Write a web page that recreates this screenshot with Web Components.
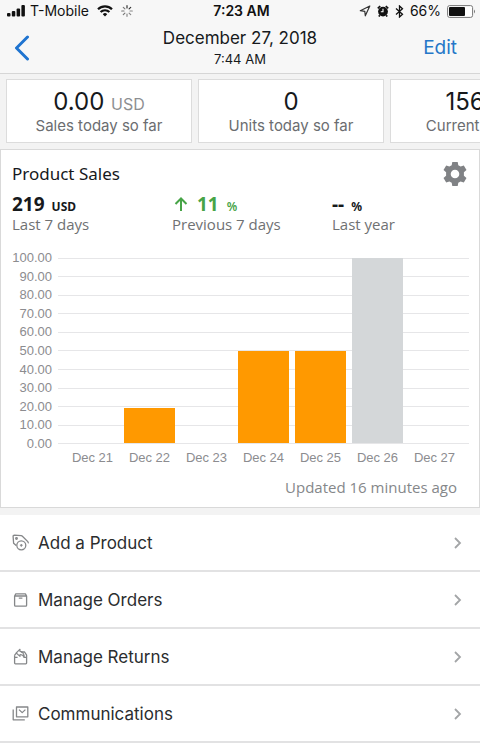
<!DOCTYPE html>
<html lang="en">
<head>
<meta charset="utf-8">
<meta name="viewport" content="width=device-width, initial-scale=1">
<title>Seller dashboard</title>
<style>
  html { background: #fff; }
  body { margin: 0; font-family: Inter, "Liberation Sans", sans-serif; color: #16191c; overflow-x: hidden; }
</style>
</head>
<body>
<seller-app></seller-app>

<script>
const define = (name, markup, setup) => {
  const template = document.createElement('template');
  template.innerHTML = `<style>*{box-sizing:border-box}button{font:inherit;border:0;padding:0;background:none;cursor:pointer}svg{display:block}</style>${markup}`;
  customElements.define(name, class extends HTMLElement {
    constructor() {
      super();
      this.attachShadow({ mode: 'open' }).append(template.content.cloneNode(true));
    }
    connectedCallback() { if (setup) setup(this, this.shadowRoot); }
  });
};

const icons = {
  tag: '<path d="M4.2 11.6 1.6 9.2 1.1 2.4q0-1.3 1.3-1.3l6.800.5q.7.1 1.200.6l5.400 5.400q.8.9.1 1.700"/><circle cx="4.500" cy="4.500" r=".8"/><circle cx="9.300" cy="11.300" r="4.500"/><path d="M7.900 11.300h2.800M9.300 9.900v2.800" stroke-width="1.100"/>',
  box: '<path d="M2.600 5v9.300q0 .9.9.9h10.200q.9 0 .9-.9V5L13.400 2.900H3.800zM3 5h11.200M6.800 7.200h3.600"/>',
  returns: '<path d="M2.600 7.200v7.900q0 .8.800.8h10.400q.8 0 .8-.8V7.200L12.600 4H9M2.600 7.200 4.600 4.800M14.600 9.400h-3M2.600 9.400h3"/><path d="M8 1.200 4.200 5 8 8.400V6.500q3 0 4.300 3Q12 3.800 8 3.400z" stroke-width="1.100"/>',
  mail: '<path d="M4.500 2h11.300v9.800H4.500zM7 4.600l3.200 3 3.200-3M1.200 4.600v10.200h11.600"/>'
};

define('status-bar', `
  <style>
    :host { display: grid; grid-template-columns: 1fr auto 1fr; align-items: center; height: 22px; padding: 0 4px 0 7px; font-size: 14px; line-height: 20px; color: #111; }
    div { display: flex; align-items: center; gap: 4px; }
    .wifi { margin: 0 4px; }
    time { font-weight: 600; }
    .right { justify-content: flex-end; gap: 6px; }
  </style>
  <div>
    <svg width="19" height="12" viewBox="1 0 19 12" fill="#111"><rect x="1" y="8" width="3.5" height="3.5" rx="1"/><rect x="5.8" y="6" width="3.5" height="5.5" rx="1"/><rect x="10.6" y="3.5" width="3.5" height="8" rx="1"/><rect x="15.4" y="0" width="3.5" height="11.5" rx="1"/></svg>
    <span>T-Mobile</span>
    <svg class="wifi" width="16" height="12" viewBox="0 0 16 12" fill="none" stroke="#111" stroke-width="2.2"><path d="M1 4.3a10 10 0 0 1 14 0M3.600 7.100a6.200 6.200 0 0 1 8.800 0"/><path d="m8 11.5-2.200-2.300a3.100 3.100 0 0 1 4.400 0z" fill="#111" stroke="none"/></svg>
    <svg width="12" height="12" viewBox="-6 -6 12 12" stroke-width="1.2" stroke-linecap="round"><path stroke="#333" d="M0-3v-2.300M2.100-2.100l1.600-1.600"/><path stroke="#888" d="M3 0h2.300M2.100 2.100l1.600 1.600M0 3v2.300"/><path stroke="#777" d="M-2.100 2.100l-1.600 1.600M-3 0h-2.300M-2.100-2.100l-1.600-1.600"/></svg>
  </div>
  <time>7:23 AM</time>
  <div class="right">
    <svg width="12" height="12" viewBox="0 0 12 12" fill="none" stroke="#333" stroke-width="1.2" stroke-linejoin="round"><path d="M10.800 1 1.300 5.700l4.500.7.5 4.400z"/></svg>
    <svg width="12" height="12" viewBox="0 0 12 12"><circle cx="6" cy="6.6" r="4.9" fill="#111"/><path d="M.8 3.300 3.200 1M11.200 3.300 8.800 1M2.800 10.300l-1 1.200M9.200 10.300l1 1.200" stroke="#111" stroke-width="1.7"/><path d="M6 3.800v3H3.800" stroke="#fff" stroke-width="1.1" fill="none"/></svg>
    <svg width="9" height="13" viewBox="0 0 9 13" fill="none" stroke="#111" stroke-width="1.3"><path d="m1 3.500 6.500 5.700-3 2.800V1l3 2.800L1 9.500"/></svg>
    <span>66%</span>
    <svg width="29" height="13" viewBox="0 0 29 13"><rect x=".6" y=".6" width="25" height="11.8" rx="2" fill="#fff" stroke="#777"/><rect x="2" y="2" width="16" height="9" rx="1" fill="#111"/><path d="M27 4.500q2 2 0 4z" fill="#777"/></svg>
  </div>`);

define('nav-bar', `
  <style>
    :host { display: grid; grid-template-columns: 1fr auto 1fr; align-items: center; height: 51px; padding: 0 14px; }
    .mid { text-align: center; }
    h1 { margin: 0; font-size: 17px; line-height: 22px; font-weight: 400; }
    p { margin: 0; font-size: 13px; line-height: 20px; }
    button { color: #2577c8; font-size: 19px; line-height: 24px; justify-self: start; }
    .edit { justify-self: end; padding: 0 9px; }
  </style>
  <button aria-label="Back"><svg width="17" height="26" viewBox="0 0 17 26" fill="none" stroke="#1f74d0" stroke-width="3" stroke-linecap="round" stroke-linejoin="round"><path d="M13.500 2 2.500 13l11 11"/></svg></button>
  <div class="mid"><h1>December 27, 2018</h1><p>7:44 AM</p></div>
  <button class="edit">Edit</button>`);

define('metric-card', `
  <style>
    :host { box-sizing: border-box; display: block; flex: 0 0 186px; padding: 8px 4px 6px; background: #fff; border: 1px solid #dcdcdc; text-align: center; white-space: nowrap; }
    .value { font-size: 24px; line-height: 28px; }
    ::slotted(small) { font-size: 16px; line-height: 16px; color: #8d8f92; }
    .label { font-size: 15px; line-height: 20px; color: #6b6d70; }
  </style>
  <div class="value"><slot></slot></div>
  <div class="label"><slot name="label"></slot></div>`);

define('metric-strip', `
  <style>
    :host { display: flex; gap: 6px; padding: 5px 6px 6px; background: #f3f3f3; overflow: hidden; border-top: 1px solid #d6d6d6; }
  </style>
  <slot></slot>`);

define('sales-stat', `
  <style>
    :host { display: block; color: #6f7173; }
    .value { display: flex; align-items: baseline; gap: 7px; height: 20px; font-size: 19px; line-height: 20px; font-weight: 700; color: #16191c; }
    :host([up]) .value { color: #47a447; gap: 8px; }
    .unit { font-size: 12px; }
    :host([up]) .unit { font-weight: 600; }
    svg { display: none; }
    :host([up]) svg { display: block; }
    .label { font: 15px/20px "Open Sans", "Noto Sans", sans-serif; }
  </style>
  <div class="value"><svg width="17" height="14" viewBox="-2 0 17 14" fill="none" stroke="#47a447" stroke-width="2"><path d="M7 14V2M1.500 7 7 1.500 12.500 7"/></svg><slot></slot><span class="unit"><slot name="unit"></slot></span></div>
  <div class="label"><slot name="label"></slot></div>`);

define('bar-chart', `
  <style>
    :host { display: grid; grid-template-columns: 40px 1fr; column-gap: 6px; font: 13px/16px "Liberation Sans", Arial, sans-serif; color: #8c8c8f; }
    .scale, .lines { display: grid; grid-template-rows: repeat(11, 1fr); height: 204px; align-items: center; }
    .scale { text-align: right; }
    .lines, .bars { grid-area: 1 / 2; }
    .lines i { height: 1px; background: #e6e6e8; }
    .bars, .days { display: grid; grid-template-columns: repeat(7, 1fr); padding: 0 6px; }
    .bars { margin: 9px 0 10px; align-items: end; }
    .bars i { margin: 0 3px; background: #ff9900; }
    .bars .latest { background: #d4d7d9; }
    .days { grid-area: 2 / 2; text-align: center; white-space: nowrap; line-height: 10px; }
  </style>
  <div class="scale"></div><div class="lines"></div><div class="bars"></div><div class="days"></div>`,
  (host, root) => {
    const data = [['Dec 21', 0], ['Dec 22', 19], ['Dec 23', 0], ['Dec 24', 50], ['Dec 25', 50], ['Dec 26', 100], ['Dec 27', 0]];
    const ticks = Array.from({ length: 11 }, (_, i) => (100 - i * 10).toFixed(2));
    root.querySelector('.scale').innerHTML = ticks.map(t => `<span>${t}</span>`).join('');
    root.querySelector('.lines').innerHTML = ticks.map(() => '<i></i>').join('');
    root.querySelector('.bars').innerHTML = data.map(([, v]) => `<i class="${v === 100 ? 'latest' : ''}" style="height:${v}%"></i>`).join('');
    root.querySelector('.days').innerHTML = data.map(([d]) => `<span>${d}</span>`).join('');
  });

define('sales-panel', `
  <style>
    :host { display: block; padding: 11px 10px 10px; background: #fff; border: 1px solid #d9d9d9; font-family: "Noto Sans", "Open Sans", sans-serif; }
    header { display: flex; justify-content: space-between; align-items: center; height: 26px; padding: 0 2px 0 1px; }
    h2 { margin: 0; font-size: 17px; line-height: 24px; font-weight: 400; }
    .stats { display: grid; grid-template-columns: 160px 160px 1fr; padding: 7px 1px 0; }
    bar-chart { margin: 15px 0 0 1px; }
    footer { padding: 14px 12px 0; text-align: right; font: 15px/20px "Open Sans", "Noto Sans", sans-serif; color: #85878a; }
  </style>
  <header>
    <h2>Product Sales</h2>
    <button aria-label="Settings"><svg width="24" height="24" viewBox="0 0 24 24" fill="#808285"><path fill-rule="evenodd" d="M9.300 0h5.400l.6 3.300 2.300 1.300 3.200-1.200 2.700 4.700-2.600 2.200v3.400l2.600 2.200-2.700 4.700-3.200-1.200-2.300 1.300-.6 3.300H9.300l-.6-3.300-2.300-1.300-3.200 1.200L.5 15.900l2.600-2.200v-3.400L.5 8.100l2.700-4.700 3.200 1.200 2.300-1.300zM12 7.700a4.300 4.300 0 1 0 0 8.600 4.300 4.300 0 0 0 0-8.600z"/></svg></button>
  </header>
  <div class="stats">
    <sales-stat>219<span slot="unit">USD</span><span slot="label">Last 7 days</span></sales-stat>
    <sales-stat up>11<span slot="unit">%</span><span slot="label">Previous 7 days</span></sales-stat>
    <sales-stat>--<span slot="unit">%</span><span slot="label">Last year</span></sales-stat>
  </div>
  <bar-chart></bar-chart>
  <footer>Updated 16 minutes ago</footer>`);

define('menu-link', `
  <style>
    :host { display: block; border-bottom: 2px solid #e2e2e3; }
    a { display: flex; align-items: center; gap: 9px; height: 55px; padding: 0 18px 0 12px; color: #2b2d2f; text-decoration: none; font-size: 17px; line-height: 24px; }
    .label { flex: 1; }
  </style>
  <a href="#"><svg class="icon" width="17" height="17" viewBox="0 0 17 17" fill="none" stroke="#858789" stroke-width="1.3" stroke-linejoin="round"></svg><span class="label"><slot></slot></span><svg width="8" height="12" viewBox="0 0 8 12" fill="none" stroke="#a3a5a7" stroke-width="1.8"><path d="m1 1 5 5-5 5"/></svg></a>`,
  (host, root) => { root.querySelector('.icon').innerHTML = icons[host.getAttribute('icon')]; });

define('seller-app', `
  <style>
    :host { display: block; }
    .top { background: #f7f7f7; }
    .menu { display: block; border-top: 7px solid #f3f3f3; }
  </style>
  <div class="top"><status-bar></status-bar><nav-bar></nav-bar></div>
  <metric-strip>
    <metric-card>0.00 <small>USD</small><span slot="label">Sales today so far</span></metric-card>
    <metric-card>0<span slot="label">Units today so far</span></metric-card>
    <metric-card>156.00<span slot="label">Current Balance</span></metric-card>
  </metric-strip>
  <sales-panel></sales-panel>
  <nav class="menu">
    <menu-link icon="tag">Add a Product</menu-link>
    <menu-link icon="box">Manage Orders</menu-link>
    <menu-link icon="returns">Manage Returns</menu-link>
    <menu-link icon="mail">Communications</menu-link>
  </nav>`);
</script>
</body>
</html>
